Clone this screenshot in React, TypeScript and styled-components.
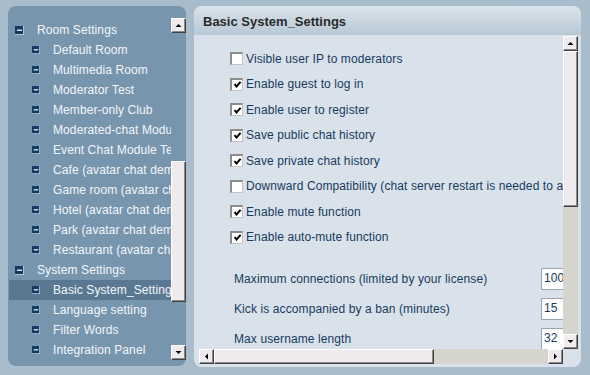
import React from 'react';
import styled, { createGlobalStyle } from 'styled-components';

const GlobalStyle = createGlobalStyle`
  html, body { margin: 0; padding: 0; }
  body {
    background: #a9bccb;
    font-family: "Liberation Sans", Arial, sans-serif;
    font-size: 12px;
    width: 590px;
    height: 375px;
    overflow: hidden;
  }
`;

const treeItems = [
  { label: 'Room Settings', parent: true },
  { label: 'Default Room' },
  { label: 'Multimedia Room' },
  { label: 'Moderator Test' },
  { label: 'Member-only Club' },
  { label: 'Moderated-chat Module' },
  { label: 'Event Chat Module Test' },
  { label: 'Cafe (avatar chat demo)' },
  { label: 'Game room (avatar chat demo)' },
  { label: 'Hotel (avatar chat demo)' },
  { label: 'Park (avatar chat demo)' },
  { label: 'Restaurant (avatar chat demo)' },
  { label: 'System Settings', parent: true },
  { label: 'Basic System_Settings', selected: true },
  { label: 'Language setting' },
  { label: 'Filter Words' },
  { label: 'Integration Panel' },
];

const checks = [
  { label: 'Visible user IP to moderators', on: false },
  { label: 'Enable guest to log in', on: true },
  { label: 'Enable user to register', on: true },
  { label: 'Save public chat history', on: true },
  { label: 'Save private chat history', on: true },
  { label: 'Downward Compatibility (chat server restart is needed to apply)', on: false },
  { label: 'Enable mute function', on: true },
  { label: 'Enable auto-mute function', on: true },
];

const fields = [
  { label: 'Maximum connections (limited by your license)', value: '1000' },
  { label: 'Kick is accompanied by a ban (minutes)', value: '15' },
  { label: 'Max username length', value: '32' },
];

const MinusIcon = ({ parent }: { parent?: boolean }) => (
  <TreeIcon width="9" height="9" viewBox="0 0 9 9" $parent={parent}>
    <rect x="0" y="0" width="9" height="9" fill={parent ? '#b3c6d6' : '#a7bdd0'} />
    <rect x="0" y="0" width="8" height="8" fill="#123a63" />
    <rect x="2" y="3.5" width="5" height="1.5" fill="#d8e4ee" />
  </TreeIcon>
);

const Arrow = ({ dir }: { dir: 'up' | 'down' | 'left' | 'right' }) => {
  const pts = {
    up: '0.5,4 6.5,4 3.5,1',
    down: '0.5,1 6.5,1 3.5,4',
    left: '4,0.5 4,6.5 1,3.5',
    right: '1,0.5 1,6.5 4,3.5',
  }[dir];
  const w = dir === 'up' || dir === 'down' ? 7 : 5;
  const h = dir === 'up' || dir === 'down' ? 5 : 7;
  return (
    <svg width={w} height={h} viewBox={`0 0 ${w} ${h}`}>
      <polygon points={pts} fill="#000" />
    </svg>
  );
};

const Check = () => (
  <svg width="9" height="9" viewBox="0 0 9 9">
    <path d="M1.5 4.2 L3.5 6.4 L7.6 1.8" fill="none" stroke="#000" strokeWidth="2" />
  </svg>
);

export default function App() {
  return (
    <>
      <GlobalStyle />
      <Page>
        <SidePanel>
          <Tree>
            {treeItems.map((item) => (
              <TreeRow key={item.label} $parent={item.parent} $selected={item.selected}>
                <MinusIcon parent={item.parent} />
                <TreeLabel>{item.label}</TreeLabel>
              </TreeRow>
            ))}
          </Tree>
          <VScroll $track="transparent">
            <ScrollButton><Arrow dir="up" /></ScrollButton>
            <Track>
              <VThumb $offset={128} $size={141} />
            </Track>
            <ScrollButton><Arrow dir="down" /></ScrollButton>
          </VScroll>
        </SidePanel>

        <MainPanel>
          <PanelHeader>Basic System_Settings</PanelHeader>
          <PanelBody>
            <Viewport>
              <CheckList>
                {checks.map((c) => (
                  <CheckRow key={c.label}>
                    <CheckBox>{c.on && <Check />}</CheckBox>
                    <span>{c.label}</span>
                  </CheckRow>
                ))}
              </CheckList>
              <FieldList>
                {fields.map((f) => (
                  <FieldRow key={f.label}>
                    <FieldLabel>{f.label}</FieldLabel>
                    <FieldInput>{f.value}</FieldInput>
                  </FieldRow>
                ))}
              </FieldList>
            </Viewport>
            <VScroll $track="#d5d5cd">
              <ScrollButton><Arrow dir="up" /></ScrollButton>
              <Track>
                <VThumb $offset={0} $size={156} />
              </Track>
              <ScrollButton><Arrow dir="down" /></ScrollButton>
            </VScroll>
            <HScroll>
              <ScrollButton><Arrow dir="left" /></ScrollButton>
              <Track>
                <HThumb $size={220} />
              </Track>
              <ScrollButton><Arrow dir="right" /></ScrollButton>
            </HScroll>
          </PanelBody>
        </MainPanel>
      </Page>
    </>
  );
}

const Page = styled.div`
  display: flex;
  gap: 8px;
  padding: 6px 9px 0 8px;
  box-sizing: border-box;
  height: 375px;
`;

const SidePanel = styled.div`
  width: 178px;
  height: 360px;
  background: #7895ae;
  border-radius: 8px;
  box-sizing: border-box;
  padding: 12px 0 6px 1px;
  display: flex;
`;

const Tree = styled.div`
  flex: 1;
  overflow: hidden;
  padding-top: 2px;
`;

const TreeRow = styled.div<{ $parent?: boolean; $selected?: boolean }>`
  height: 20px;
  display: flex;
  align-items: center;
  gap: 13px;
  padding-left: ${(p) => (p.$parent ? '6px' : '23px')};
  background: ${(p) => (p.$selected ? '#5a7891' : 'transparent')};
  white-space: nowrap;
`;

const TreeIcon = styled.svg<{ $parent?: boolean }>`
  flex: none;
  width: ${(p) => (p.$parent ? '9px' : '8px')};
  height: ${(p) => (p.$parent ? '9px' : '8px')};
`;

const TreeLabel = styled.span`
  color: #f3f6f9;
  font-size: 12px;
  letter-spacing: 0.1px;
`;

const VScroll = styled.div<{ $track: string }>`
  width: 15px;
  flex: none;
  display: flex;
  flex-direction: column;
  background: ${(p) => p.$track};
`;

const HScroll = styled.div`
  grid-column: 1 / 2;
  height: 15px;
  display: flex;
  background: #d5d5cd;
`;

const Track = styled.div`
  flex: 1;
  display: flex;
  flex-direction: inherit;
`;

const bevel = `
  box-sizing: border-box;
  background: #eeeaee;
  border-top: 1px solid #ffffff;
  border-left: 1px solid #ffffff;
  border-right: 1px solid #404040;
  border-bottom: 1px solid #404040;
  box-shadow: inset -1px -1px 0 #8a8a8a;
`;

const ScrollButton = styled.div`
  ${bevel}
  width: 15px;
  height: 15px;
  flex: none;
  display: flex;
  align-items: center;
  justify-content: center;
`;

const VThumb = styled.div<{ $offset: number; $size: number }>`
  ${bevel}
  margin-top: ${(p) => p.$offset}px;
  height: ${(p) => p.$size}px;
  width: 15px;
`;

const HThumb = styled.div<{ $size: number }>`
  ${bevel}
  width: ${(p) => p.$size}px;
  height: 15px;
`;

const MainPanel = styled.div`
  width: 387px;
  height: 361px;
  display: flex;
  flex-direction: column;
  border-radius: 8px;
  overflow: hidden;
  background: #d9e2ea;
`;

const PanelHeader = styled.div`
  height: 29px;
  flex: none;
  background: linear-gradient(#dae3ea, #b7c8d5);
  padding-left: 9px;
  padding-top: 1px;
  box-sizing: border-box;
  display: flex;
  align-items: center;
  font-weight: bold;
  font-size: 13px;
  color: #2a2a2a;
`;

const PanelBody = styled.div`
  flex: 1;
  display: grid;
  grid-template-columns: 364px 15px;
  grid-template-rows: 313px 15px;
  padding: 1px 3px 0 5px;
`;

const Viewport = styled.div`
  overflow: hidden;
  padding: 10px 0 0 31px;
  color: #173a60;
  letter-spacing: 0.1px;
`;

const CheckList = styled.div`
  display: flex;
  flex-direction: column;
`;

const CheckRow = styled.div`
  height: 25.5px;
  display: flex;
  align-items: center;
  gap: 3px;
  white-space: nowrap;
`;

const CheckBox = styled.span`
  width: 13px;
  height: 13px;
  box-sizing: border-box;
  flex: none;
  background: #fff;
  border-top: 2px solid #8d8d8d;
  border-left: 2px solid #8d8d8d;
  border-right: 1px solid #c4c4c4;
  border-bottom: 1px solid #c4c4c4;
  display: flex;
  align-items: center;
  justify-content: center;
`;

const FieldList = styled.div`
  margin-top: 18px;
  padding-left: 4px;
  display: flex;
  flex-direction: column;
  gap: 8px;
`;

const FieldRow = styled.div`
  display: flex;
  align-items: center;
  height: 22px;
  white-space: nowrap;
`;

const FieldLabel = styled.span`
  width: 307px;
  flex: none;
`;

const FieldInput = styled.div`
  width: 40px;
  height: 22px;
  flex: none;
  box-sizing: border-box;
  background: #fff;
  border: 1px solid #9aa7b3;
  padding: 2px 0 0 2px;
  font-size: 12px;
`;
